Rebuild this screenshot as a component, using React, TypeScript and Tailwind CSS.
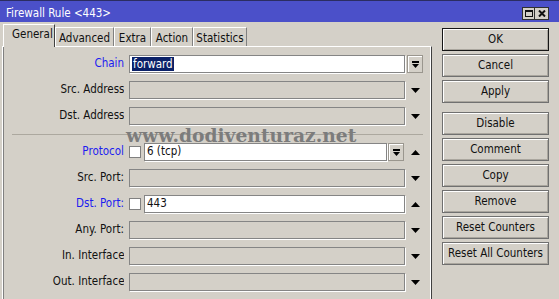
import React from "react";

const font = "font-['DejaVu_Sans_Condensed','DejaVu_Sans',sans-serif]";

function Tri({ up }: { up?: boolean }) {
  return (
    <svg width="9" height="5" viewBox="0 0 9 5">
      {up ? <polygon points="0,5 9,5 4.5,0" fill="#000" /> : <polygon points="0,0 9,0 4.5,5" fill="#000" />}
    </svg>
  );
}

function DropBtn() {
  return (
    <div className="w-[16px] h-[18px] shrink-0 border border-[#9a968e] shadow-[inset_1px_1px_0_#fff] flex items-center justify-center">
      <svg width="7" height="7" viewBox="0 0 7 7">
        <rect x="0" y="0" width="7" height="2" fill="#000" />
        <polygon points="0,3 7,3 3.5,7" fill="#000" />
      </svg>
    </div>
  );
}

function Label({ text, blue, clip }: { text: string; blue?: boolean; clip?: boolean }) {
  return (
    <div className="w-[121px] mr-[5px] shrink-0 overflow-hidden whitespace-nowrap flex justify-end">
      <span className={`${blue ? "text-[#1c1cf0]" : "text-[#111]"} ${clip ? "-mr-[4px]" : ""}`}>{text}</span>
    </div>
  );
}

function Box({ white, className = "", children }: { white?: boolean; className?: string; children?: React.ReactNode }) {
  return (
    <div
      className={`h-[18px] border border-[#858585] shadow-[1px_1px_0_#fff] flex items-center pl-[2px] whitespace-nowrap overflow-hidden ${
        white ? "bg-white" : "bg-[#d4d0c8]"
      } ${className}`}
    >
      {children}
    </div>
  );
}

function Check() {
  return <div className="w-[12px] h-[12px] shrink-0 bg-white border border-[#808080]" />;
}

function Row({ label, blue, clip, field, side }: { label: string; blue?: boolean; clip?: boolean; field: React.ReactNode; side: React.ReactNode }) {
  return (
    <div className="flex items-center h-[18px]">
      <Label text={label} blue={blue} clip={clip} />
      <div className="w-[276px] shrink-0 flex items-center">{field}</div>
      <div className="w-[16px] ml-[2px] shrink-0 flex justify-center">{side}</div>
    </div>
  );
}

function Btn({ children, def, className = "" }: { children: React.ReactNode; def?: boolean; className?: string }) {
  return (
    <div
      className={`h-[23px] flex items-center justify-center whitespace-nowrap border ${
        def ? "border-[#161616]" : "border-[#707070]"
      } shadow-[inset_1px_1px_0_#fff,inset_-1px_-1px_0_#aaa69e] ${className}`}
    >
      {children}
    </div>
  );
}

const tabs = [
  { name: "Advanced", w: "w-[59px]" },
  { name: "Extra", w: "w-[37px]" },
  { name: "Action", w: "w-[42px]" },
  { name: "Statistics", w: "w-[54px]" },
];

export default function App() {
  return (
    <div className={`relative w-[559px] h-[299px] overflow-hidden bg-[#d4d0c8] flex flex-col text-[11.5px] text-[#111] ${font}`}>
      {/* title bar */}
      <div className="h-[22px] shrink-0 border-t border-[#2b2d62] bg-[#4b50c9] flex items-start">
        <div className="mt-[6px] ml-[6px] leading-[13px] text-white">Firewall Rule &lt;443&gt;</div>
        <div className="ml-auto mr-[10px] mt-[6px] flex">
          <div className="w-[13px] h-[13px] bg-[#d4d0c8] border border-[#303030] flex items-center justify-center">
            <div className="w-[8px] h-[7px] border border-t-2 border-[#111]" />
          </div>
          <div className="w-[14px] h-[13px] bg-[#d4d0c8] border border-l-0 border-[#303030] flex items-center justify-center">
            <svg width="8" height="7" viewBox="0 0 8 7">
              <path d="M1 0.5 L7 6.5 M7 0.5 L1 6.5" stroke="#111" strokeWidth="2" />
            </svg>
          </div>
        </div>
      </div>

      <div className="flex flex-1">
        {/* left side: tabs + panel */}
        <div className="ml-[2px] w-[430px] shrink-0 flex flex-col pt-[2px]">
          <div className="flex items-end h-[22px] pl-[1px]">
            <div className="relative z-10 w-[52px] h-[23px] -mb-[1px] bg-[#d4d0c8] border-t border-l border-white border-r border-r-[#404040] pl-[8px] pt-[3px] leading-[13px]">
              General
            </div>
            {tabs.map((t) => (
              <div
                key={t.name}
                className={`${t.w} h-[19px] border-t border-l border-white border-r border-r-[#808080] flex justify-center pt-[4px] leading-[13px]`}
              >
                {t.name}
              </div>
            ))}
          </div>

          <div className="relative flex-1 border-t border-l border-white border-r border-r-[#404040] shadow-[inset_1px_0_0_#808080,inset_-1px_0_0_#fff] pt-[8px] flex flex-col gap-[8px]">
            <Row
              label="Chain"
              blue
              field={
                <Box white className="w-[276px]">
                  <span className="bg-[#0b2168] text-white px-[1px] leading-[14px]">forward</span>
                </Box>
              }
              side={<DropBtn />}
            />
            <Row label="Src. Address:" clip field={<Box className="w-[276px]" />} side={<Tri />} />
            <Row label="Dst. Address:" clip field={<Box className="w-[276px]" />} side={<Tri />} />
            <div className="h-[2px] ml-[9px] w-[411px] border-b border-[#aca89f]" />
            <Row
              label="Protocol"
              blue
              field={
                <>
                  <Check />
                  <Box white className="ml-[3px] w-[243px]">6 (tcp)</Box>
                  <div className="ml-[1px]">
                    <DropBtn />
                  </div>
                </>
              }
              side={<Tri up />}
            />
            <Row label="Src. Port:" field={<Box className="w-[276px]" />} side={<Tri />} />
            <Row
              label="Dst. Port:"
              blue
              field={
                <>
                  <Check />
                  <Box white className="ml-[3px] w-[261px]">443</Box>
                </>
              }
              side={<Tri up />}
            />
            <Row label="Any. Port:" field={<Box className="w-[276px]" />} side={<Tri />} />
            <Row label="In. Interface:" clip field={<Box className="w-[276px]" />} side={<Tri />} />
            <Row label="Out. Interface:" clip field={<Box className="w-[276px]" />} side={<Tri />} />

            <div className="absolute left-[123px] top-[79px] font-['DejaVu_Serif',serif] font-bold text-[18.7px] leading-[19px] text-[#7c7c7c] whitespace-nowrap pointer-events-none">
              www.dodiventuraz.net
            </div>
          </div>
        </div>

        {/* right side buttons */}
        <div className="ml-[10px] w-[107px] shrink-0 pt-[6px] flex flex-col gap-[3px]">
          <Btn def>OK</Btn>
          <Btn>Cancel</Btn>
          <Btn>Apply</Btn>
          <Btn className="mt-[6px]">Disable</Btn>
          <Btn>Comment</Btn>
          <Btn>Copy</Btn>
          <Btn>Remove</Btn>
          <Btn>Reset Counters</Btn>
          <Btn>Reset All Counters</Btn>
        </div>
      </div>
    </div>
  );
}
